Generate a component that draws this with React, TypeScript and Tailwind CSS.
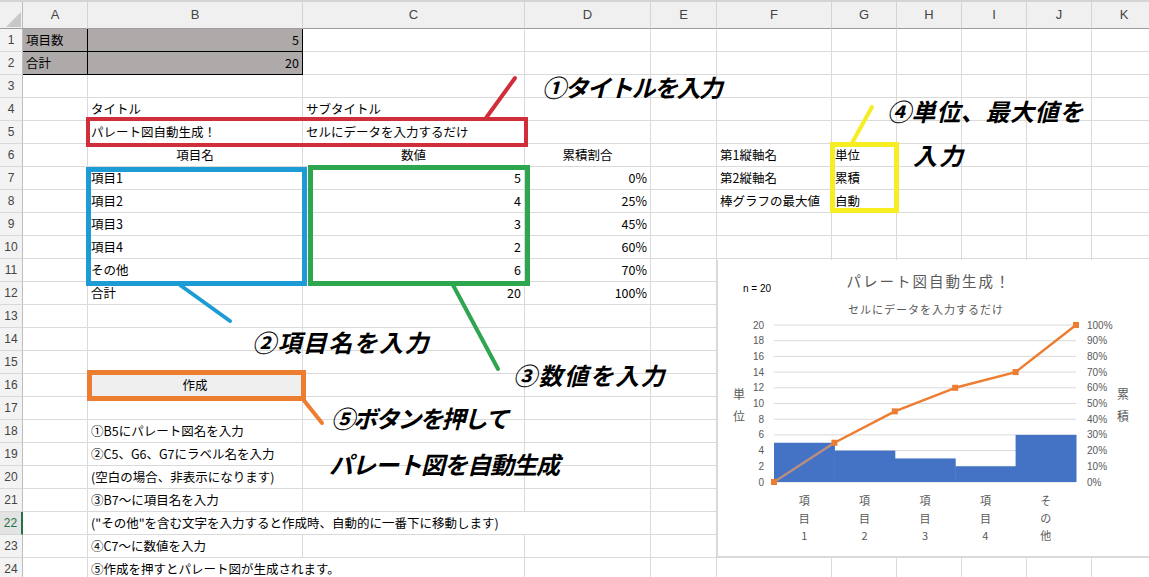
import React from "react";

type Cell = { t: string; a?: "l" | "c" | "r"; span?: number; dark?: boolean; bg?: string };

const COLS = ["A", "B", "C", "D", "E", "F", "G", "H", "I", "J", "K"];

const data: Record<number, Record<number, Cell>> = {
  1: { 0: { t: "項目数", dark: true }, 1: { t: "5", a: "r", dark: true } },
  2: { 0: { t: "合計", dark: true }, 1: { t: "20", a: "r", dark: true } },
  4: { 1: { t: "タイトル" }, 2: { t: "サブタイトル" } },
  5: { 1: { t: "パレート図自動生成！" }, 2: { t: "セルにデータを入力するだけ" } },
  6: {
    1: { t: "項目名", a: "c" },
    2: { t: "数値", a: "c" },
    3: { t: "累積割合", a: "c" },
    5: { t: "第1縦軸名" },
    6: { t: "単位" },
  },
  7: { 1: { t: "項目1" }, 2: { t: "5", a: "r" }, 3: { t: "0%", a: "r" }, 5: { t: "第2縦軸名" }, 6: { t: "累積" } },
  8: { 1: { t: "項目2" }, 2: { t: "4", a: "r" }, 3: { t: "25%", a: "r" }, 5: { t: "棒グラフの最大値" }, 6: { t: "自動" } },
  9: { 1: { t: "項目3" }, 2: { t: "3", a: "r" }, 3: { t: "45%", a: "r" } },
  10: { 1: { t: "項目4" }, 2: { t: "2", a: "r" }, 3: { t: "60%", a: "r" } },
  11: { 1: { t: "その他" }, 2: { t: "6", a: "r" }, 3: { t: "70%", a: "r" } },
  12: { 1: { t: "合計" }, 2: { t: "20", a: "r" }, 3: { t: "100%", a: "r" } },
  16: { 1: { t: "作成", a: "c", bg: "gray" } },
  18: { 1: { t: "①B5にパレート図名を入力" } },
  19: { 1: { t: "②C5、G6、G7にラベル名を入力" } },
  20: { 1: { t: "(空白の場合、非表示になります)" } },
  21: { 1: { t: "③B7～に項目名を入力" } },
  22: { 1: { t: "(\"その他\"を含む文字を入力すると作成時、自動的に一番下に移動します)", span: 3 } },
  23: { 1: { t: "④C7～に数値を入力" } },
  24: { 1: { t: "⑤作成を押すとパレート図が生成されます。", span: 2 } },
};

function Row({ r }: { r: number }) {
  const row = data[r] || {};
  const cells: React.ReactNode[] = [];
  const selected = r === 22;
  cells.push(
    <div
      key="h"
      className={
        selected
          ? "flex items-center justify-center bg-[#e3e3e3] border-r-2 border-r-[#217346] border-b border-b-[#d4d4d4] text-[12px] text-[#217346] font-['Liberation_Sans',sans-serif]"
          : "flex items-center justify-center bg-[#f3f3f3] border-r border-r-[#bdbdbd] border-b border-b-[#d9d9d9] text-[12px] text-[#444] font-['Liberation_Sans',sans-serif]"
      }
    >
      {r}
    </div>
  );
  let c = 0;
  while (c < COLS.length) {
    const cell = row[c];
    const span = cell?.span ?? 1;
    const spanCls = span === 3 ? "col-span-3" : span === 2 ? "col-span-2" : "";
    const align = cell?.a === "r" ? "justify-end" : cell?.a === "c" ? "justify-center" : "justify-start";
    const box = cell?.dark ? "border-r border-b border-black bg-[#aeaaaa]" : "border-r border-b border-[#dadada]";
    const bg = cell?.bg === "gray" ? "bg-[#efefef]" : "";
    cells.push(
      <div
        key={c}
        className={`flex items-center ${align} ${spanCls} ${box} ${bg} px-[3px] whitespace-nowrap text-[12.5px] leading-none text-black`}
      >
        {cell?.t ?? ""}
      </div>
    );
    c += span;
  }
  return <>{cells}</>;
}

function Chart() {
  const L = 56;
  const R = 358;
  const T = 65;
  const B = 222;
  const H = B - T;
  const cw = (R - L) / 5;
  const vals = [5, 4, 3, 2, 6];
  const pct = [0, 0.25, 0.45, 0.6, 0.7, 1];
  const names = [
    ["項", "目", "1"],
    ["項", "目", "2"],
    ["項", "目", "3"],
    ["項", "目", "4"],
    ["そ", "の", "他"],
  ];
  const pts = pct.map((p, i) => [L + i * cw, B - p * H]);
  const font = "'Noto Sans CJK JP', sans-serif";
  return (
    <div className="absolute left-[717px] top-[260px] w-[440px] h-[297px] bg-white border-l border-b border-[#d9d9d9]">
      <svg width="440" height="297" viewBox="0 0 440 297">
        <text x="25" y="32" fontSize="10" fill="#000" fontFamily="'Liberation Sans', sans-serif">
          n = 20
        </text>
        <text x="211" y="27" fontSize="14.5" fill="#595959" textAnchor="middle" letterSpacing="2" fontFamily={font}>
          パレート図自動生成！
        </text>
        <text x="208" y="54" fontSize="11" fill="#595959" textAnchor="middle" letterSpacing="1" fontFamily={font}>
          セルにデータを入力するだけ
        </text>
        {Array.from({ length: 11 }).map((_, i) => {
          const y = B - (i * H) / 10;
          return (
            <g key={i}>
              <line x1={L} x2={R} y1={y} y2={y} stroke="#d9d9d9" strokeWidth="1" />
              <text x="46" y={y + 3.5} fontSize="10" fill="#595959" textAnchor="end" fontFamily="'Liberation Sans', sans-serif">
                {i * 2}
              </text>
              <text x="369" y={y + 3.5} fontSize="10" fill="#595959" fontFamily="'Liberation Sans', sans-serif">
                {i * 10}%
              </text>
            </g>
          );
        })}
        {vals.map((v, i) => {
          const h = (v / 20) * H;
          return <rect key={i} x={L + i * cw} y={B - h} width={cw + 0.5} height={h} fill="#4472c4" />;
        })}
        <line x1={pts[0][0]} y1={pts[0][1]} x2={pts[1][0]} y2={pts[1][1]} stroke="#b88e80" strokeWidth="2.5" />
        <polyline
          points={pts
            .slice(1)
            .map((p) => p.join(","))
            .join(" ")}
          fill="none"
          stroke="#ed7d31"
          strokeWidth="2.5"
          strokeLinejoin="round"
        />
        {pts.map((p, i) => (
          <rect key={i} x={p[0] - 3} y={p[1] - 3} width="6" height="6" fill="#ed7d31" />
        ))}
        {names.map((n, i) => {
          const cx = L + cw * i + cw / 2;
          return (
            <g key={i}>
              {n.map((ch, j) => (
                <text
                  key={j}
                  x={cx}
                  y={245 + j * 17.5}
                  fontSize="11"
                  fill="#595959"
                  textAnchor="middle"
                  fontFamily={font}
                >
                  {ch}
                </text>
              ))}
            </g>
          );
        })}
        <text x="21" y="139" fontSize="12" fill="#595959" textAnchor="middle" fontFamily={font}>
          単
        </text>
        <text x="21" y="161" fontSize="12" fill="#595959" textAnchor="middle" fontFamily={font}>
          位
        </text>
        <text x="405" y="139" fontSize="12" fill="#595959" textAnchor="middle" fontFamily={font}>
          累
        </text>
        <text x="405" y="161" fontSize="12" fill="#595959" textAnchor="middle" fontFamily={font}>
          積
        </text>
      </svg>
    </div>
  );
}

export default function App() {
  const rows = Array.from({ length: 24 }, (_, i) => i + 1);
  const note = "absolute whitespace-nowrap text-[24px] leading-none font-bold italic text-black";
  return (
    <div className="relative w-[1149px] h-[577px] overflow-hidden bg-white font-['Noto_Sans_CJK_JP',sans-serif]">
      <div className="h-[2px] bg-[#d4d4d4]" />
      <div className="grid grid-cols-[23px_65px_215px_222px_126px_66px_115px_65px_65px_65px_65px_65px] grid-rows-[27px_repeat(24,23px)] w-[1157px]">
        <div className="relative bg-[#f0f0f0] border-r border-r-[#bdbdbd] border-b border-b-[#9e9e9e]">
          <svg className="absolute right-[1px] bottom-[1px]" width="15" height="15" viewBox="0 0 15 15">
            <polygon points="15,0 15,15 0,15" fill="#c8c8c8" />
          </svg>
        </div>
        {COLS.map((c) => (
          <div
            key={c}
            className="flex items-center justify-center bg-[#f0f0f0] border-r border-r-[#d4d4d4] border-b border-b-[#9e9e9e] text-[13px] text-[#444] font-['Liberation_Sans',sans-serif]"
          >
            {c}
          </div>
        ))}
        {rows.map((r) => (
          <Row key={r} r={r} />
        ))}
      </div>

      <Chart />

      {/* annotation boxes */}
      <div className="absolute left-[86px] top-[117px] w-[442px] h-[30px] border-[4px] border-[#cf2e3a]" />
      <div className="absolute left-[86px] top-[167px] w-[221px] h-[119px] border-[5px] border-[#1d9bd5]" />
      <div className="absolute left-[308px] top-[165px] w-[222px] h-[121px] border-[5px] border-[#2ea54f]" />
      <div className="absolute left-[87px] top-[370px] w-[219px] h-[31px] border-[5px] border-[#ed7d31]" />
      <div className="absolute left-[830px] top-[142px] w-[69px] h-[71px] border-[5px] border-[#f6ee22]" />

      <svg className="absolute left-0 top-0 pointer-events-none" width="1149" height="577">
        <line x1="515" y1="78" x2="486" y2="118" stroke="#cf2e3a" strokeWidth="4" strokeLinecap="round" />
        <line x1="872" y1="107" x2="852" y2="143" stroke="#f6ee22" strokeWidth="4" strokeLinecap="round" />
        <line x1="180" y1="285" x2="230" y2="321" stroke="#1d9bd5" strokeWidth="4" strokeLinecap="round" />
        <line x1="453" y1="285" x2="498" y2="369" stroke="#2ea54f" strokeWidth="4" strokeLinecap="round" />
        <line x1="302" y1="398" x2="322" y2="423" stroke="#ed7d31" strokeWidth="4" strokeLinecap="round" />
      </svg>

      {/* annotation texts */}
      <div className={`${note} left-[542px] top-[75px] tracking-[-1.6px]`}>①タイトルを入力</div>
      <div className={`${note} left-[887px] top-[99px] tracking-[0.6px]`}>④単位、最大値を</div>
      <div className={`${note} left-[913px] top-[143px] tracking-[2px]`}>入力</div>
      <div className={`${note} left-[252px] top-[330px] tracking-[1.4px]`}>②項目名を入力</div>
      <div className={`${note} left-[513px] top-[363px] tracking-[1.5px]`}>③数値を入力</div>
      <div className={`${note} left-[331px] top-[406px] tracking-[-1.9px]`}>⑤ボタンを押して</div>
      <div className={`${note} left-[329px] top-[452px] tracking-[-1px]`}>パレート図を自動生成</div>
    </div>
  );
}
